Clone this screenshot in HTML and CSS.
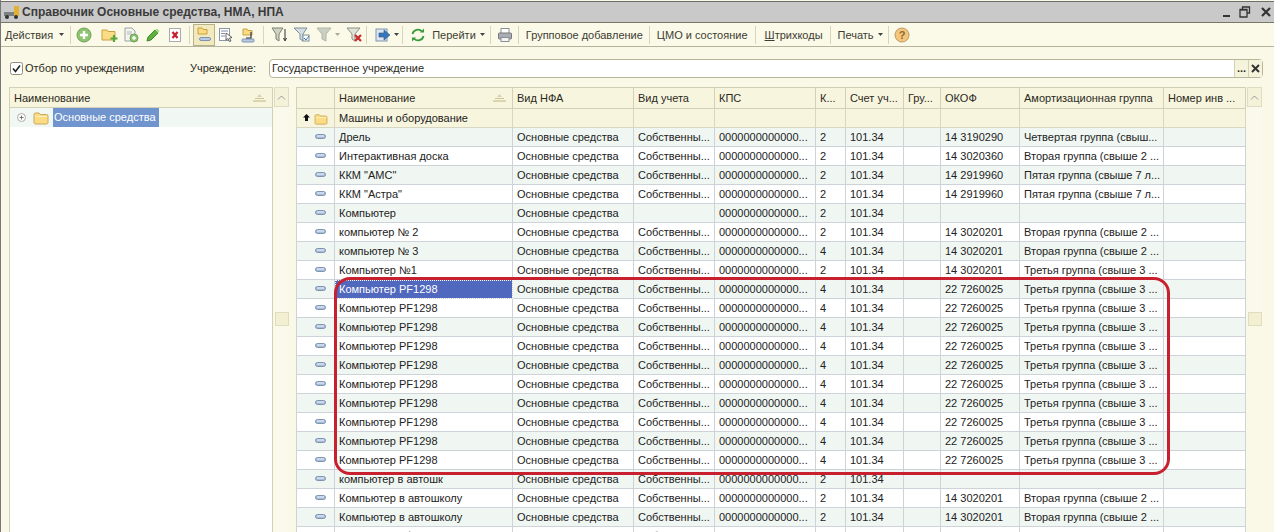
FILE: index.html
```html
<!DOCTYPE html>
<html lang="ru">
<head>
<meta charset="utf-8">
<title>Справочник Основные средства, НМА, НПА</title>
<link rel="stylesheet" href="styles.css">
</head>
<body>
<svg class="defs" width="0" height="0">
  <defs>
    <symbol id="folder" viewBox="0 0 16 14"><path d="M1 3.500Q1 2 2.500 2H6l1.500 1.500h6Q15 3.500 15 5v6.500Q15 13 13.500 13h-11Q1 13 1 11.500Z" fill="#fbdc84" stroke="#c9a85a"/><path d="M2 5h12v1H2Z" fill="#fff1bd"/></symbol>
    <symbol id="item" viewBox="0 0 11 5"><rect x="0.500" y="0.500" width="10" height="4" rx="2" fill="#a9bdd8" stroke="#7d93b0"/><rect x="2" y="1.500" width="7" height="1" fill="#eef4fb"/></symbol>
    <symbol id="arrow" viewBox="0 0 5 3"><path d="M0 0h5L2.500 3Z" fill="#444"/></symbol>
  </defs>
</svg>

<header class="titlebar">
  <svg class="title-icon" width="18" height="14" viewBox="0 0 18 14"><rect x="1" y="7" width="10" height="4" fill="#7b7f86"/><rect x="11" y="1" width="5" height="10" fill="#e3b02f"/><circle cx="4" cy="12" r="2" fill="#333"/><circle cx="13" cy="12" r="2" fill="#333"/></svg>
  <span class="title-text">Справочник Основные средства, НМА, НПА</span>
  <span class="win-buttons">
    <svg width="12" height="12" viewBox="0 0 12 12"><rect x="5" y="9" width="7" height="2" fill="#333"/></svg>
    <svg width="12" height="12" viewBox="0 0 12 12"><path d="M3.500 3V1h7v6H8M1 3.500h7V11H1Z" fill="none" stroke="#333" stroke-width="1.300"/><rect x="1" y="3" width="7" height="1.500" fill="#333"/></svg>
    <svg width="12" height="12" viewBox="0 0 12 12"><path d="M2 2l8 8M10 2l-8 8" stroke="#333" stroke-width="2.200"/></svg>
  </span>
</header>

<nav class="toolbar">
  <span class="tb-text tb-first">Действия</span><svg class="tb-arrow tb-arrow-first" width="5" height="3"><use href="#arrow"/></svg><i class="sep sep-0"></i>
  <span class="tb-icon"><svg width="16" height="16" viewBox="0 0 16 16"><circle cx="8" cy="8" r="7" fill="#8fc46f" stroke="#70a060"/><path d="M8 4v8M4 8h8" stroke="#fff" stroke-width="2.400"/></svg></span>
  <span class="tb-icon tb-newfolder"><svg width="18" height="16" viewBox="0 0 18 16"><path d="M1 3h5l1 1.500h7V13H1Z" fill="#fbdc84" stroke="#c9a040"/><path d="M13 8v7M9.500 11.500h7" stroke="#54a83e" stroke-width="2.200"/></svg></span>
  <span class="tb-icon tb-narrow"><svg width="16" height="16" viewBox="0 0 16 16"><path d="M2 1h7l3 3v10H2Z" fill="#f4f4ee" stroke="#9aa3a8"/><path d="M4 5h5M4 7h5" stroke="#b0b8bc"/><circle cx="11" cy="11" r="4" fill="#8fc46f" stroke="#70a060"/><path d="M11 9v4M9 11h4" stroke="#fff" stroke-width="1.400"/></svg></span>
  <span class="tb-icon tb-pencil"><svg width="16" height="16" viewBox="0 0 16 16"><path d="M2 14l1-4 7-7 3 3-7 7Z" fill="#5fb13f" stroke="#3c8a2a"/><path d="M10 3l2-1.500L14.500 4 13 6Z" fill="#a9dd8a"/></svg></span>
  <span class="tb-icon"><svg width="16" height="16" viewBox="0 0 16 16"><rect x="2.500" y="1.500" width="11" height="13" fill="#fff" stroke="#a9a9b0"/><path d="M5.500 5l5 6M10.500 5l-5 6" stroke="#c8202f" stroke-width="2.200"/></svg></span>
  <i class="sep sep-a"></i>
  <span class="tb-icon tb-pressed"><svg width="16" height="16" viewBox="0 0 16 16"><path d="M2 1h4l1 1.500h4V7H2Z" fill="#fbdc84" stroke="#c9a040"/><rect x="3.500" y="10.500" width="11" height="3" rx="1.500" fill="#b9cbe2" stroke="#7d93b0"/></svg></span>
  <span class="tb-icon"><svg width="16" height="16" viewBox="0 0 16 16"><rect x="1.500" y="1.500" width="10" height="12" fill="#fff" stroke="#8b97a6"/><path d="M3 4h7M3 6.500h4M3 9h4" stroke="#7f8f9e"/><path d="M8 6l6 4.500-2.500.5 1.500 3-1.500.500-1.500-3L8 13Z" fill="#fff" stroke="#444" stroke-width=".8"/></svg></span>
  <span class="tb-icon"><svg width="16" height="16" viewBox="0 0 16 16"><path d="M3 2h4l1 1.500h4V8H3Z" fill="#fbdc84" stroke="#c9a040"/><rect x="2" y="12" width="12" height="3" rx="1" fill="#b9cbe2" stroke="#7d93b0"/><path d="M11 5v6H6" fill="none" stroke="#334" stroke-width="1.200"/></svg></span>
  <i class="sep sep-b"></i>
  <span class="tb-icon"><svg width="18" height="16" viewBox="0 0 18 16"><path d="M1 1h11L8 7v7L5 12V7Z" fill="#cfd3c4" stroke="#7c8270"/><path d="M14 2v11M12.500 11l1.500 3 1.500-3" fill="none" stroke="#333"/></svg></span>
  <span class="tb-icon"><svg width="18" height="16" viewBox="0 0 18 16"><path d="M1 1h13L10 7v7L7 12V7Z" fill="#d4dde2" stroke="#7f909a"/><rect x="10" y="8" width="6" height="6" fill="#fff" stroke="#7f909a"/><path d="M11 11l2 2 3-4" fill="none" stroke="#3a7bbf"/></svg></span>
  <span class="tb-icon tb-dim"><svg width="16" height="16" viewBox="0 0 16 16"><path d="M1 1h14L10 7v7L6 12V7Z" fill="#bcc2b6" stroke="#9aa094"/></svg></span>
  <svg class="tb-arrow-dim" width="5" height="3"><use href="#arrow"/></svg>
  <span class="tb-icon tb-filter-x"><svg width="18" height="16" viewBox="0 0 18 16"><path d="M1 1h13L9 7v7L6 12V7Z" fill="#e0e3d8" stroke="#8b9186"/><path d="M9 8l6 6M15 8l-6 6" stroke="#cc2a2a" stroke-width="2.200"/></svg></span>
  <i class="sep sep-c"></i>
  <span class="tb-icon tb-goto"><svg width="18" height="16" viewBox="0 0 18 16"><rect x="2" y="2" width="11" height="12" fill="#dbe6f1" stroke="#8096ad"/><path d="M5 6h5V3l6 5-6 5v-3H5Z" fill="#3977bd" stroke="#28548a" stroke-width=".6"/></svg></span>
  <svg class="tb-arrow tb-arrow-goto" width="5" height="3"><use href="#arrow"/></svg><i class="sep sep-d"></i>
  <span class="tb-icon tb-refresh"><svg width="16" height="16" viewBox="0 0 16 16"><path d="M2.500 7A5.500 5.500 0 0 1 12 4.500" fill="none" stroke="#3b9a3b" stroke-width="1.800"/><path d="M13.500 9A5.500 5.500 0 0 1 4 11.500" fill="none" stroke="#3b9a3b" stroke-width="1.800"/><path d="M10 5.500h4v-4ZM6 10.500H2v4Z" fill="#3b9a3b"/></svg></span>
  <span class="tb-text tb-go">Перейти</span><svg class="tb-arrow" width="5" height="3"><use href="#arrow"/></svg><i class="sep sep-e"></i>
  <span class="tb-icon tb-print"><svg width="16" height="16" viewBox="0 0 16 16"><rect x="4" y="1.500" width="8" height="5" fill="#fff" stroke="#8a8f96"/><rect x="1.500" y="6" width="13" height="6" rx="1" fill="#a9aeb6" stroke="#777"/><rect x="4" y="10.500" width="8" height="4" fill="#f4f4f4" stroke="#8a8f96"/></svg></span>
  <i class="sep sep-f"></i>
  <span class="tb-text">Групповое добавление</span><i class="sep sep-g1"></i>
  <span class="tb-text">ЦМО и состояние</span><i class="sep sep-g"></i>
  <span class="tb-text tb-code"><u>Ш</u>трихкоды</span><i class="sep sep-g"></i>
  <span class="tb-text">Печать</span><svg class="tb-arrow" width="5" height="3"><use href="#arrow"/></svg><i class="sep sep-h"></i>
  <span class="tb-icon tb-help"><svg width="16" height="16" viewBox="0 0 16 16"><circle cx="8" cy="8" r="7" fill="#f5c67a" stroke="#bb9a66"/><text x="8" y="12" text-anchor="middle" class="help-mark">?</text></svg></span>
</nav>

<section class="filter">
  <label class="check"><svg width="13" height="13" viewBox="0 0 13 13"><rect x=".5" y=".5" width="12" height="12" rx="2" fill="#fff" stroke="#8d8d80"/><path d="M3 6.500l2.500 3L10 3.500" fill="none" stroke="#222" stroke-width="1.600"/></svg><span>Отбор по учреждениям</span></label>
  <span class="field-label">Учреждение:</span>
  <div class="field">
    <span class="field-value">Государственное учреждение</span>
    <span class="field-btn">...</span>
    <span class="field-btn field-clear"><svg width="9" height="9" viewBox="0 0 9 9"><path d="M1 1l7 7M8 1L1 8" stroke="#333" stroke-width="2"/></svg></span>
  </div>
</section>

<main class="panes">
  <section class="tree-pane">
    <div class="tree">
      <div class="tree-head"><span>Наименование</span><svg class="sort" width="13" height="8" viewBox="0 0 13 8"><path d="M6.500 0L9 3H4Z" fill="#d9d4ad"/><rect x="2" y="4" width="9" height="1" fill="#c9c39a"/><rect y="6" width="13" height="2" fill="#d9d4ad"/></svg></div>
      <div class="tree-row">
        <svg class="plus" width="9" height="9" viewBox="0 0 9 9"><circle cx="4.500" cy="4.500" r="4" fill="#fff" stroke="#aaa"/><path d="M2.500 4.500h4M4.500 2.500v4" stroke="#777"/></svg>
        <svg class="folder" width="16" height="14"><use href="#folder"/></svg>
        <span class="tree-sel">Основные средства</span>
      </div>
    </div>
    <div class="scroll"><span class="scroll-up"><svg width="9" height="5" viewBox="0 0 9 5"><path d="M1 4.500l3.500-3.500L8 4.500" fill="none" stroke="#999"/></svg></span><span class="scroll-thumb"></span></div>
  </section>

  <section class="grid-pane">
    <table class="grid">
      <colgroup><col class="c0"><col class="c1"><col class="c2"><col class="c3"><col class="c4"><col class="c5"><col class="c6"><col class="c7"><col class="c8"><col class="c9"><col class="c10"></colgroup>
      <thead><tr><th></th><th><span class="th-sort">Наименование<svg class="sort" width="13" height="8" viewBox="0 0 13 8"><path d="M6.500 0L9 3H4Z" fill="#d9d4ad"/><rect x="2" y="4" width="9" height="1" fill="#c9c39a"/><rect y="6" width="13" height="2" fill="#d9d4ad"/></svg></span></th><th>Вид НФА</th><th>Вид учета</th><th>КПС</th><th>К...</th><th>Счет уч...</th><th>Гру...</th><th>ОКОФ</th><th>Амортизационная группа</th><th>Номер инв ...</th></tr></thead>
      <tbody id="rows">
        <tr class="group"><td class="ico"><svg class="up-mark" width="7" height="7" viewBox="0 0 7 7"><path d="M3.500 0L7 3.500H5V7H2V3.500H0Z" fill="#111"/></svg><svg class="folder" width="14" height="12"><use href="#folder"/></svg></td><td>Машины и оборудование</td><td></td><td></td><td></td><td></td><td></td><td></td><td></td><td></td><td></td></tr>
      </tbody>
    </table>
    <div class="scroll scroll-right"><span class="scroll-up"><svg width="9" height="5" viewBox="0 0 9 5"><path d="M1 4.500l3.500-3.500L8 4.500" fill="none" stroke="#999"/></svg></span><span class="scroll-thumb"></span></div>
    <div class="highlight"></div>
  </section>
</main>
<script src="app.js"></script>
</body>
</html>
```
FILE: styles.css
```css
* { box-sizing: border-box; }
html, body { margin: 0; height: 532px; overflow: hidden; }
body {
  display: flex; flex-direction: column;
  background: #faf8e6;
  font: 11px "Liberation Sans", Arial, sans-serif;
  color: #2a2a22;
  border-left: 1px solid #777;
}
.defs { position: absolute; }

.titlebar {
  height: 22px; margin-top: 1px; flex: none;
  display: flex; align-items: center;
  background: #c9c9c9;
  border-top: 1px solid #6e6e6e;
  border-bottom: 1px solid #77776c;
  padding-left: 2px;
}
.title-icon { margin-right: 1px; }
.title-text { font-weight: bold; font-size: 12px; color: #3a3a3a; }
.win-buttons { margin-left: auto; display: flex; gap: 9px; padding-right: 2px; }

.toolbar {
  height: 24px; flex: none;
  display: flex; align-items: center;
  background: #fbf9e8;
  border-bottom: 1px solid #b6b49c;
  color: #3d3d33;
}
.tb-text { white-space: nowrap; font-size: 11px; }
.tb-first { margin-left: 4px; }
.tb-arrow { margin-left: 4px; flex: none; }
.tb-arrow-first { margin-left: 6px; }
.tb-arrow-goto { margin-left: 0; }
.tb-arrow-dim { margin-left: 0; opacity: .45; flex: none; }
.sep { width: 1px; height: 18px; background: #d8d5bb; flex: none; }
.tb-icon { width: 22px; height: 22px; display: flex; align-items: center; justify-content: center; flex: none; }
.tb-narrow { width: 20px; }
.tb-newfolder { margin-left: 4px; }
.tb-pencil { margin-left: 1px; }
.tb-pressed { background: #f2e9bf; border: 1px solid #b5b18d; }
.tb-dim { opacity: .75; }
.tb-filter-x { margin-left: 4px; }
.sep-0 { margin: 0 2px 0 6px; }
.sep-a { margin: 0 3px 0 3px; }
.sep-b { margin: 0 5px 0 4px; }
.sep-c { margin: 0 5px 0 0; }
.sep-d { margin: 0 5px 0 3px; }
.sep-e { margin: 0 3px 0 5px; }
.sep-f { margin: 0 7px 0 2px; }
.sep-g1 { margin: 0 7px 0 6px; }
.sep-g { margin: 0 7px 0 7px; }
.sep-h { margin: 0 2px 0 5px; }
.tb-refresh { width: 20px; }
.tb-go { margin-left: 4px; }
.tb-code { margin-left: 2px; }
.help-mark { font: bold 11px "Liberation Sans", sans-serif; fill: #8a6a3a; }

.filter {
  height: 40px; flex: none;
  display: flex; align-items: center;
  padding: 2px 11px 0 9px;
}
.check { display: flex; align-items: center; gap: 2px; width: 180px; }
.field-label { width: 79px; }
.field {
  flex: 1; height: 19px;
  display: flex; align-items: center;
  background: #fff;
  border: 1px solid #b8b69a; border-radius: 4px;
}
.field-value { flex: 1; padding-left: 2px; }
.field-btn {
  width: 14px; height: 17px; background: #f6f3dc;
  display: flex; align-items: center; justify-content: center;
  border-left: 1px solid #d4d1b4; font-weight: bold; line-height: 17px;
}

.panes { flex: 1; min-height: 0; display: flex; padding-left: 8px; }
.tree-pane { width: 280px; display: flex; flex: none; margin-right: 7px; }
.tree { flex: 1; background: #fff; border: 1px solid #d2d0b5; border-bottom: 0; }
.tree-head {
  height: 20px; background: #f8f5de;
  border-bottom: 1px solid #d2d0b5;
  display: flex; align-items: center; justify-content: space-between;
  padding: 0 6px 0 4px;
}
.tree-row { height: 19px; display: flex; align-items: center; padding-left: 7px; background: #f1f8f4; }
.plus { margin-right: 7px; }
.folder { flex: none; }
.tree-row .folder { margin-right: 4px; }
.tree-sel { background: #7094cd; color: #fff; height: 19px; line-height: 19px; padding: 0 3px 0 1px; }

.scroll { width: 15px; flex: none; margin-left: 1px; display: flex; flex-direction: column; align-items: center; background: #faf9eb; }
.scroll-up { width: 15px; height: 20px; background: #f5f2da; border: 1px solid #dfdcc2; display: flex; align-items: center; justify-content: center; }
.scroll-thumb { width: 14px; height: 14px; margin-top: 205px; background: #f2efd3; border: 1px solid #e0ddbf; }

.grid-pane { position: relative; flex: 1; min-width: 0; display: flex; align-items: flex-start; height: 100%; overflow: hidden; }
.grid { border-collapse: collapse; table-layout: fixed; width: 949px; flex: none; background: #fff; }
.c0 { width: 38px; } .c1 { width: 178px; } .c2 { width: 121px; } .c3 { width: 81px; }
.c4 { width: 101px; } .c5 { width: 30px; } .c6 { width: 58px; } .c7 { width: 37px; }
.c8 { width: 79px; } .c9 { width: 144px; } .c10 { width: 82px; }
.grid th {
  height: 21px; padding: 0 4px 1px; text-align: left; font-weight: normal;
  background: #f8f5de; border: 1px solid #d2d0b5; border-top-color: #cfcdb2;
  white-space: nowrap; overflow: hidden;
}
.th-sort { display: flex; align-items: center; justify-content: space-between; padding-right: 2px; }
.grid td {
  height: 19px; padding: 0 4px; border: 1px solid #cdd3d9;
  white-space: nowrap; overflow: hidden; color: #222;
}
.grid tr:nth-child(even) td { background: #f0f7f3; }
.grid td.ico { padding: 0 0 3px; text-align: right; line-height: 12px; }
.grid td.ico svg { display: inline-block; vertical-align: middle; margin-right: 8px; }
.grid tr.group td { background: #f8f5de; border-color: #d8d7c4; }
.grid tr.group td.ico { text-align: left; padding: 0; }
.grid tr.group td.ico .folder { margin: 0 0 0 4px; }
.grid tr.group td.ico .up-mark { margin: 0 0 2px 6px; }
.grid td.current { background: #5068bd !important; color: #fff; outline: 1px dotted #fff; outline-offset: -1px; }
.scroll-right { margin-left: 1px; }

.highlight {
  position: absolute; left: 38px; top: 190px; width: 836px; height: 198px;
  border: 3px solid #c8202f; border-radius: 16px; pointer-events: none;
}
```
FILE: app.js
```js
var D = '0000000000000...', O = 'Основные средства', S = 'Собственны...';
var A2 = 'Вторая группа (свыше 2 ...', A3 = 'Третья группа (свыше 3 ...', A4 = 'Четвертая группа (свыш...', A5 = 'Пятая группа (свыше 7 л...';
var data = [
  ['Дрель', S, '2', '14 3190290', A4],
  ['Интерактивная доска', S, '2', '14 3020360', A2],
  ['ККМ "АМС"', S, '2', '14 2919960', A5],
  ['ККМ "Астра"', S, '2', '14 2919960', A5],
  ['Компьютер', '', '2', '', ''],
  ['компьютер № 2', S, '2', '14 3020201', A2],
  ['компьютер № 3', S, '4', '14 3020201', A2],
  ['Компьютер №1', S, '2', '14 3020201', A3]
];
for (var i = 0; i < 10; i++) data.push(['Компьютер PF1298', S, '4', '22 7260025', A3]);
data.push(['компьютер в автошк', S, '2', '', '']);
data.push(['Компьютер в автошколу', S, '2', '14 3020201', A2]);
data.push(['Компьютер в автошколу', S, '2', '14 3020201', A2]);
data.push(['Компьютер офисный', S, '2', '14 3020201', A2]);
var tb = document.getElementById('rows');
data.forEach(function (r, n) {
  var tr = document.createElement('tr');
  var cur = n === 8 ? ' class="current"' : '';
  tr.innerHTML = '<td class="ico"><svg width="11" height="5"><use href="#item"/></svg></td>' +
    '<td' + cur + '>' + r[0] + '</td><td>' + O + '</td><td>' + r[1] + '</td><td>' + D + '</td><td>' + r[2] +
    '</td><td>101.34</td><td></td><td>' + r[3] + '</td><td>' + r[4] + '</td><td></td>';
  tb.appendChild(tr);
});
```
